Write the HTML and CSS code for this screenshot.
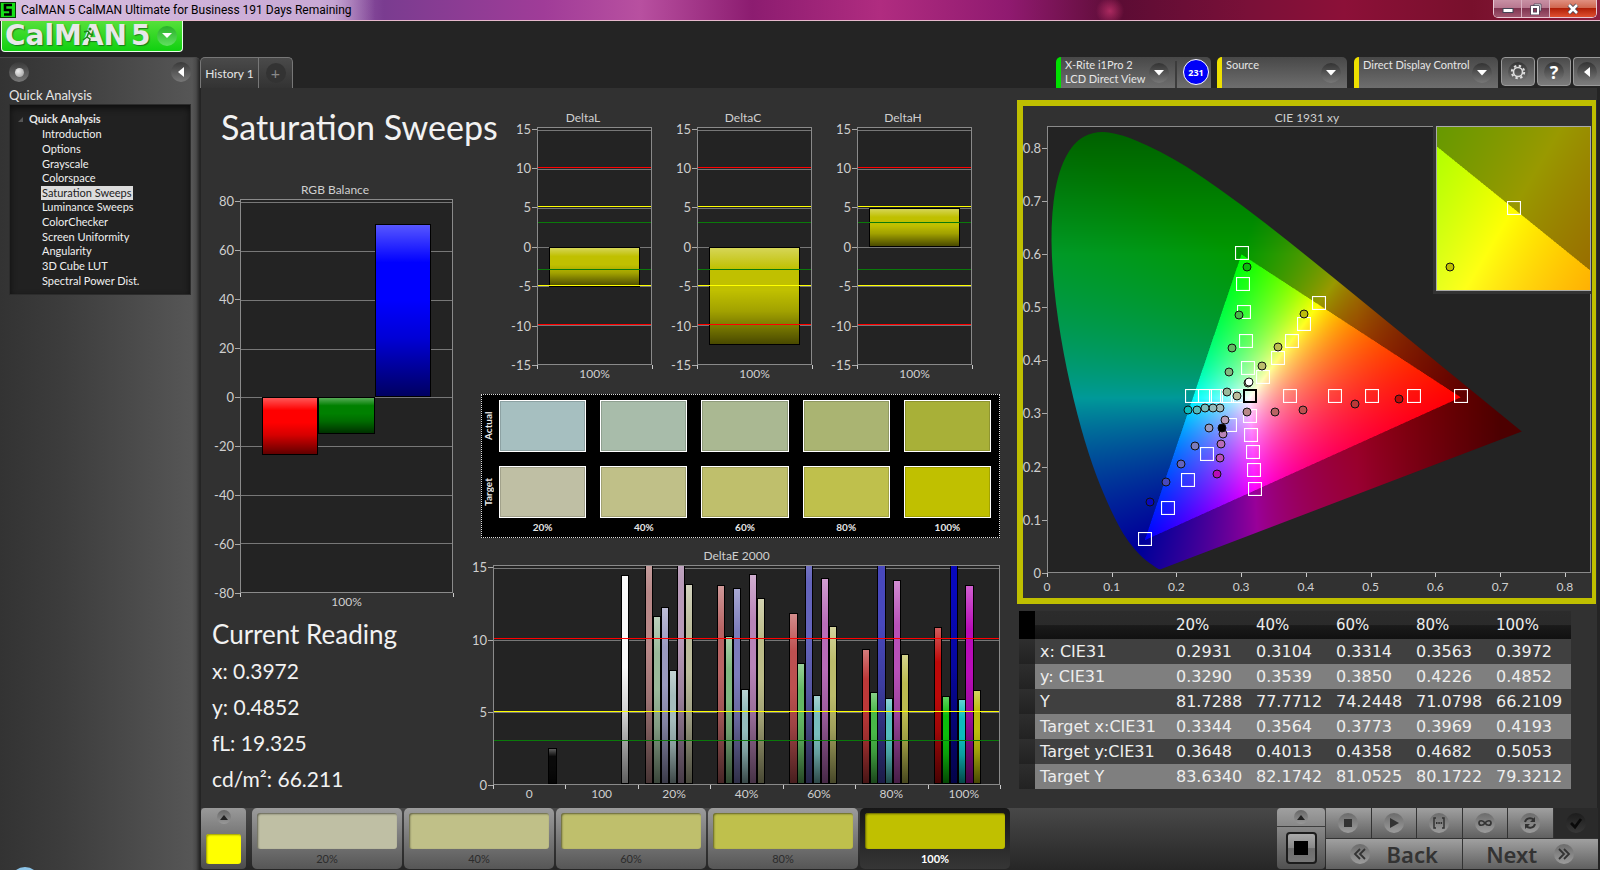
FILE: index.html
```html
<!DOCTYPE html>
<html lang="en">
<head>
<meta charset="utf-8">
<title>CalMAN 5</title>
<link rel="stylesheet" href="styles.css">
</head>
<body>
<header class="titlebar">
  <svg class="app-icon" viewBox="0 0 16 16" aria-hidden="true"><rect width="16" height="16" fill="#0a3c0a"/><rect x="1" y="1" width="14" height="14" fill="#18e018"/><path d="M12 3H5v5h5.5v4.500H4" fill="none" stroke="#000" stroke-width="2.600"/></svg>
  <span class="window-title">CalMAN 5 CalMAN Ultimate for Business 191 Days Remaining</span>
  <div class="window-buttons">
    <button class="win-btn" aria-label="Minimize"><svg width="12" height="12" viewBox="0 0 12 12"><rect x="1" y="5.500" width="10" height="4" fill="#fff" stroke="#445"/></svg></button>
    <button class="win-btn" aria-label="Restore"><svg width="12" height="12" viewBox="0 0 12 12"><path d="M4 1h7v7H9V3H4z" fill="#fff" stroke="#445" stroke-width=".8"/><rect x="2" y="4" width="6" height="6.500" fill="none" stroke="#445" stroke-width="3.400"/><rect x="2" y="4" width="6" height="6.500" fill="none" stroke="#fff" stroke-width="2"/></svg></button>
    <button class="win-btn win-close" aria-label="Close"><svg width="12" height="12" viewBox="0 0 12 12"><path d="M2 2l8 8M10 2l-8 8" stroke="#445" stroke-width="4.200"/><path d="M2 2l8 8M10 2l-8 8" stroke="#fff" stroke-width="2.600"/></svg></button>
  </div>
</header>

<div class="app">
  <div class="brand-row">
    <button class="logo" aria-label="CalMAN 5 menu">
      <span class="logo-text">CalMAN</span><span class="logo-text">5</span>
      <span class="logo-arrow"><svg width="10" height="6" viewBox="0 0 10 6"><path d="M0 0h10L5 5z" fill="#fff"/></svg></span>
      <svg class="runner" width="12" height="18" viewBox="0 0 12 18" aria-hidden="true"><circle cx="8" cy="3" r="1.600" fill="#1a8a1a"/><path d="M2 6l4-1 2 3 3 1M7 6l-2 5 3 2-1 4M5 11l-4 3" fill="none" stroke="#1a8a1a" stroke-width="1.500"/></svg>
    </button>
  </div>

  <div class="workspace">
    <aside class="sidebar">
      <div class="sidebar-tools">
        <button class="round" aria-label="Record"><span class="ball"></span></button>
        <button class="round" aria-label="Collapse panel"><svg width="6" height="10" viewBox="0 0 6 10"><path d="M6 0v10L0 5z" fill="#fff"/></svg></button>
      </div>
      <h2 class="sidebar-title">Quick Analysis</h2>
      <nav class="tree">
        <div class="tree-root"><svg width="5" height="5" viewBox="0 0 5 5"><path d="M5 0v5H0z" fill="#555"/></svg>Quick Analysis</div>
        <ul class="tree-list">
          <li><a href="#intro">Introduction</a></li>
          <li><a href="#options">Options</a></li>
          <li><a href="#gray">Grayscale</a></li>
          <li><a href="#space">Colorspace</a></li>
          <li><a href="#sat" class="current" aria-current="page">Saturation Sweeps</a></li>
          <li><a href="#lum">Luminance Sweeps</a></li>
          <li><a href="#checker">ColorChecker</a></li>
          <li><a href="#uniform">Screen Uniformity</a></li>
          <li><a href="#angle">Angularity</a></li>
          <li><a href="#lut">3D Cube LUT</a></li>
          <li><a href="#spectral">Spectral Power Dist.</a></li>
        </ul>
      </nav>
      <span class="orb"></span>
    </aside>

    <div class="content">
      <div class="toolbar">
        <div class="tabs">
          <button class="tab">History 1</button>
          <button class="tab tab-add" aria-label="New history"><span>+</span></button>
        </div>
        <div class="devices">
          <div class="device device-meter">
            <button class="device-menu" aria-haspopup="menu"><span class="device-name">X-Rite i1Pro 2<br>LCD Direct View</span><span class="drop"><svg width="10" height="6" viewBox="0 0 10 6"><path d="M0 0h10L5 5.500z" fill="#fff"/></svg></span></button>
            <span class="divider"></span>
            <button class="meter-count">231</button>
          </div>
          <div class="device device-source">
            <button class="device-menu" aria-haspopup="menu"><span class="device-name">Source</span><span class="drop"><svg width="10" height="6" viewBox="0 0 10 6"><path d="M0 0h10L5 5.500z" fill="#fff"/></svg></span></button>
          </div>
          <div class="device device-display">
            <button class="device-menu" aria-haspopup="menu"><span class="device-name">Direct Display Control</span><span class="drop"><svg width="10" height="6" viewBox="0 0 10 6"><path d="M0 0h10L5 5.500z" fill="#fff"/></svg></span></button>
          </div>
          <button class="tool" aria-label="Settings"><span class="dot"><svg width="16" height="16" viewBox="0 0 16 16"><circle cx="8" cy="8" r="4.500" fill="none" stroke="#ddd" stroke-width="1.600"/><circle cx="8" cy="8" r="6.200" fill="none" stroke="#ddd" stroke-width="2" stroke-dasharray="2.400 2.470"/></svg></span></button>
          <button class="tool" aria-label="Help"><span class="dot dot-help">?</span></button>
          <button class="tool tool-last" aria-label="Collapse toolbar"><span class="dot"><svg width="6" height="10" viewBox="0 0 6 10"><path d="M6 0v10L0 5z" fill="#fff"/></svg></span></button>
        </div>
      </div>

      <main class="board">
        <section class="col-left">
          <h1>Saturation Sweeps</h1>
          <div class="chart chart-rgb" data-chart="rgb"></div>
          <div class="reading">
            <h2>Current Reading</h2>
            <p>x: 0.3972</p>
            <p>y: 0.4852</p>
            <p>fL: 19.325</p>
            <p>cd/m²: 66.211</p>
          </div>
        </section>

        <section class="col-mid">
          <div class="deltas">
            <div class="chart" data-chart="deltaL"></div>
            <div class="chart" data-chart="deltaC"></div>
            <div class="chart" data-chart="deltaH"></div>
          </div>
          <div class="compare">
            <span class="side-label">Actual</span>
            <i class="swatch a20"></i><i class="swatch a40"></i><i class="swatch a60"></i><i class="swatch a80"></i><i class="swatch a100"></i>
            <span class="side-label">Target</span>
            <i class="swatch t20"></i><i class="swatch t40"></i><i class="swatch t60"></i><i class="swatch t80"></i><i class="swatch t100"></i>
            <span></span><b>20%</b><b>40%</b><b>60%</b><b>80%</b><b>100%</b>
          </div>
          <div class="chart chart-de" data-chart="deltaE"></div>
        </section>

        <section class="col-right">
          <div class="cie-card">
            <div class="chart chart-cie" data-chart="cie"></div>
          </div>
          <table class="data">
            <thead><tr><td class="grip"></td><td></td><th scope="col">20%</th><th scope="col">40%</th><th scope="col">60%</th><th scope="col">80%</th><th scope="col">100%</th></tr></thead>
            <tbody>
              <tr><td class="grip"></td><th scope="row">x: CIE31</th><td>0.2931</td><td>0.3104</td><td>0.3314</td><td>0.3563</td><td>0.3972</td></tr>
              <tr><td class="grip"></td><th scope="row">y: CIE31</th><td>0.3290</td><td>0.3539</td><td>0.3850</td><td>0.4226</td><td>0.4852</td></tr>
              <tr><td class="grip"></td><th scope="row">Y</th><td>81.7288</td><td>77.7712</td><td>74.2448</td><td>71.0798</td><td>66.2109</td></tr>
              <tr><td class="grip"></td><th scope="row">Target x:CIE31</th><td>0.3344</td><td>0.3564</td><td>0.3773</td><td>0.3969</td><td>0.4193</td></tr>
              <tr><td class="grip"></td><th scope="row">Target y:CIE31</th><td>0.3648</td><td>0.4013</td><td>0.4358</td><td>0.4682</td><td>0.5053</td></tr>
              <tr><td class="grip"></td><th scope="row">Target Y</th><td>83.6340</td><td>82.1742</td><td>81.0525</td><td>80.1722</td><td>79.3212</td></tr>
            </tbody>
          </table>
        </section>
      </main>

      <footer class="dock">
        <button class="current-color" aria-label="Current color"><span class="up"><svg width="8" height="5" viewBox="0 0 8 5"><path d="M0 5h8L4 0z" fill="#222"/></svg></span><i></i></button>
        <div class="patterns">
          <button class="pattern"><i class="t20"></i>20%</button>
          <button class="pattern"><i class="t40"></i>40%</button>
          <button class="pattern"><i class="t60"></i>60%</button>
          <button class="pattern"><i class="t80"></i>80%</button>
          <button class="pattern selected"><i class="t100"></i>100%</button>
        </div>
        <div class="transport">
          <div class="window-size">
            <button class="size-up" aria-label="More"><span class="up"><svg width="8" height="5" viewBox="0 0 8 5"><path d="M0 5h8L4 0z" fill="#222"/></svg></span></button>
            <button class="size-box" aria-label="Pattern window"><span><i></i></span></button>
          </div>
          <div class="controls">
            <button aria-label="Stop"><span class="disc"><svg width="20" height="20" viewBox="0 0 20 20"><rect x="6" y="6" width="8" height="8" fill="#333"/></svg></span></button>
            <button aria-label="Play"><span class="disc"><svg width="20" height="20" viewBox="0 0 20 20"><path d="M6 5v10l9-5z" fill="#333"/></svg></span></button>
            <button aria-label="Read series"><span class="disc"><svg width="20" height="20" viewBox="0 0 20 20"><path d="M7 5H5v10h2M13 5h2v10h-2" fill="none" stroke="#333" stroke-width="1.500"/><path d="M7 10h1.500M9.300 10h1.500M11.600 10h1.500" stroke="#333" stroke-width="2"/></svg></span></button>
            <button aria-label="Read continuous"><span class="disc"><svg width="20" height="20" viewBox="0 0 20 20"><path d="M10 10C8 7 4 7 4 10s4 3 6 0 6-3 6 0-4 3-6 0z" fill="none" stroke="#333" stroke-width="1.700"/></svg></span></button>
            <button aria-label="Refresh"><span class="disc"><svg width="20" height="20" viewBox="0 0 20 20"><path d="M5 9c1-4 6-5 9-2M15 11c-1 4-6 5-9 2" fill="none" stroke="#333" stroke-width="2"/><path d="M15 4v5h-5zM5 16v-5h5z" fill="#333"/></svg></span></button>
            <button class="done" aria-label="Accept"><span class="disc"><svg width="20" height="20" viewBox="0 0 20 20"><path d="M5 10l4 4 6-8" fill="none" stroke="#0a0a0a" stroke-width="2.800"/></svg></span></button>
            <button class="nav-btn"><span class="disc"><svg width="20" height="20" viewBox="0 0 20 20"><path d="M10 5l-5 5 5 5M15 5l-5 5 5 5" fill="none" stroke="#333" stroke-width="1.800"/></svg></span><b>Back</b></button>
            <button class="nav-btn"><b>Next</b><span class="disc"><svg width="20" height="20" viewBox="0 0 20 20"><path d="M5 5l5 5-5 5M10 5l5 5-5 5" fill="none" stroke="#333" stroke-width="1.800"/></svg></span></button>
          </div>
        </div>
      </footer>
    </div>
  </div>
</div>
<script src="charts.js"></script>
</body>
</html>
```
FILE: styles.css
```css
* { box-sizing: border-box; }
body {
  margin: 0;
  min-height: 100vh;
  display: flex;
  flex-direction: column;
  background: #242424;
  color: #e6e6e6;
  font-family: Lato, "Open Sans", sans-serif;
  font-size: 12px;
  overflow-x: hidden;
}
button {
  font: inherit;
  color: inherit;
  border: 0;
  margin: 0;
  padding: 0;
  background: none;
}
h1, h2, p, ul { margin: 0; padding: 0; font-weight: 400; }
svg { display: block; }

/* title bar */
.titlebar {
  height: 21px;
  display: flex;
  align-items: center;
  border-bottom: 1px solid #e6b8cc;
  background:
    radial-gradient(ellipse 14px 14px at 1110px 11px, rgba(220, 60, 120, .6), transparent),
    linear-gradient(90deg, rgba(240, 225, 245, .6) 0, rgba(240, 225, 245, .5) 335px, transparent 375px),
    linear-gradient(90deg, #b48cc0 0, #a070b4 20%, #7a3c90 24%, #a03c98 34%, #b850a0 40%, #8c1c70 47%, #b02c80 55%, #901a70 63%, #5c0c34 70%, #7a1038 78%, #8c1038 84%, #78102c 92%, #8c2040 100%);
}
.app-icon { width: 16px; height: 16px; margin-right: 5px; }
.window-title { font: 12px Roboto, sans-serif; color: #000; flex: 1; }
.window-buttons {
  display: flex;
  align-self: flex-start;
  height: 18px;
  margin-right: 3px;
  border: 1px solid #e8c8d4;
  border-top: 0;
  border-radius: 0 0 5px 5px;
  overflow: hidden;
}
.win-btn {
  width: 28px;
  display: grid;
  place-items: center;
  background: linear-gradient(#c890a4 0, #b87890 45%, #803450 50%, #a05870 100%);
  border-right: 1px solid #d8b0c0;
}
.win-close { width: 46px; border: 0; background: linear-gradient(#e09080 0, #d06850 45%, #b02008 50%, #e05030 100%); }

/* shell */
.app { flex: 1; display: flex; flex-direction: column; }
.brand-row { height: 36px; }
.logo {
  position: relative;
  display: flex;
  align-items: center;
  gap: 4px;
  width: 182px;
  height: 31px;
  margin-left: 1px;
  padding-left: 3px;
  background: linear-gradient(#56e03a, #10d010);
  border: 1px solid #e8ffe8;
  border-top: 0;
  border-radius: 0 0 4px 4px;
}
.logo-text {
  font: bold 28px/28px "DejaVu Sans", sans-serif;
  color: #e8e8e8;
  text-shadow: 1px 1px 1px #1a7a1a;
}
.logo-arrow {
  display: grid;
  place-items: center;
  flex: none;
  width: 20px;
  height: 20px;
  margin-left: 2px;
  border-radius: 50%;
  background: linear-gradient(#28b028, #60e060);
}
.runner { position: absolute; left: 80px; top: 5px; }
.workspace { flex: 1; display: flex; align-items: stretch; }

/* sidebar */
.sidebar {
  position: relative;
  flex: none;
  width: 200px;
  padding: 4px 9px 0;
  background: linear-gradient(90deg, #333 0, #3c3c3c 30%, #565656 96%, #4a4a4a 98%, #222 100%);
  border-top: 1px solid #4a4a4a;
  border-radius: 0 5px 0 0;
  overflow: hidden;
}
.sidebar-tools { display: flex; justify-content: space-between; }
.round {
  width: 20px;
  height: 20px;
  display: grid;
  place-items: center;
  border-radius: 50%;
  background: linear-gradient(#3a3a3a, #777);
}
.ball { width: 9px; height: 9px; border-radius: 50%; background: radial-gradient(circle at 35% 35%, #eee, #999); }
.sidebar-title { font-size: 13px; line-height: 18px; padding-top: 4px; }
.tree {
  height: 191px;
  padding: 6px 0 0 8px;
  background: #212121;
  border: 1px solid #2c2c2c;
  box-shadow: inset 0 3px 6px #0e0e0e;
  font-size: 11px;
}
.tree-root { display: flex; align-items: center; gap: 6px; font-weight: 700; line-height: 16px; }
.tree-list {
  list-style: none;
  display: grid;
  grid-auto-rows: 1fr;
  height: 161px;
  padding-left: 23px;
}
.tree-list li { display: flex; align-items: center; }
.tree a { color: #f0f0f0; text-decoration: none; line-height: 14px; padding: 0 1px; }
.tree a.current { background: #dcdcdc; color: #222; }
.orb { position: absolute; left: 10px; bottom: -27px; width: 30px; height: 30px; border-radius: 50%; background: #8cc4e8; }

/* toolbar */
.content { flex: 1; min-width: 0; display: flex; flex-direction: column; }
.toolbar { display: flex; justify-content: space-between; height: 31px; }
.tabs { display: flex; }
.tab {
  height: 31px;
  width: 59px;
  border: 1px solid #777;
  border-bottom: 0;
  border-radius: 5px 0 0 0;
  background: linear-gradient(#4a4a4a, #333);
  font-size: 12px;
  white-space: nowrap;
}
.tab-add { width: 34px; border-left: 0; border-radius: 0 5px 0 0; display: grid; place-items: center; }
.tab-add span { width: 20px; height: 20px; line-height: 19px; border-radius: 50%; background: #333; color: #888; font-size: 16px; }
.devices { display: flex; align-items: flex-start; overflow: hidden; }
.device {
  display: flex;
  height: 31px;
  margin-right: 7px;
  border-left: 5px solid #eee000;
  border-radius: 5px 5px 0 0;
  background: linear-gradient(#484848, #6e6e6e);
}
.device-meter { width: 155px; margin-right: 6px; border-left-color: #00e000; }
.device-source { width: 130px; }
.device-display { width: 144px; margin-right: 3px; }
.device-menu { flex: 1; display: flex; justify-content: space-between; padding: 1px 6px 0 4px; text-align: left; font-size: 11px; }
.device-name { line-height: 14px; white-space: nowrap; }
.drop, .dot {
  display: grid;
  place-items: center;
  flex: none;
  width: 20px;
  height: 20px;
  border-radius: 50%;
  background: linear-gradient(#333, #777);
}
.device-menu .drop { margin-top: 5px; margin-left: -6px; }
.divider { width: 2px; background: #3c3c3c; margin-top: 4px; }
.meter-count {
  width: 26px;
  height: 26px;
  margin: 2px 2px 0 6px;
  border: 1px solid #fff;
  border-radius: 50%;
  background: #0000f8;
  color: #fff;
  font: bold 9px "Open Sans", sans-serif;
}
.tool {
  width: 34px;
  height: 29px;
  margin-right: 2px;
  display: grid;
  place-items: center;
  border: 1px solid #999;
  border-radius: 4px;
  background: linear-gradient(#4a4a4a, #7c7c7c);
}
.tool-last { width: 27px; margin: 0; border-right: 0; border-radius: 4px 0 0 4px; }
.dot-help { font: bold 18px/20px "Open Sans", sans-serif; color: #fff; }

/* board */
.board {
  flex: 1;
  display: grid;
  grid-template-columns: 239fr 527fr 579fr;
  column-gap: 17px;
  margin: 0 3px 0 1px;
  padding: 12px 1px 6px 16px;
  background: #313131;
}
.board > section { min-width: 0; display: flex; flex-direction: column; }
.board h1 { font-size: 34px; line-height: 40px; padding: 7px 0 0 4px; white-space: nowrap; color: #f2f2f2; }
.reading { margin: 6px 0 0 -5px; color: #f2f2f2; white-space: nowrap; }
.reading h2 { font-size: 26px; line-height: 37px; }
.reading p { font-size: 21px; line-height: 36px; }
.col-mid { padding-top: 10px; }

/* charts */
.chart {
  flex: 1;
  min-width: 0;
  display: grid;
  grid-template-columns: 23px minmax(0, 1fr);
  grid-template-rows: 17px minmax(0, 1fr) 17px;
  color: #cfcfcf;
  font-size: 13px;
}
.chart-rgb { flex: none; height: 428px; margin: 35px 3px 0 0; }
.chart-de { grid-template-columns: 20px minmax(0, 1fr); margin-top: 10px; }
.chart-cie { grid-template-columns: 24px minmax(0, 1fr); grid-template-rows: 20px minmax(0, 1fr) 25px; }
.chart-title { grid-column: 1 / -1; text-align: center; line-height: 16px; font-size: 12px; }
.chart-cie .chart-title { line-height: 24px; }
.y-axis { position: relative; }
.y-axis span { position: absolute; right: 6px; transform: translateY(-50%); line-height: 16px; }
.y-axis i { position: absolute; right: 0; width: 5px; height: 1px; background: #aaa; }
.plot { position: relative; background: #232323; border: 1px solid #8a8a8a; }
.plot-clip { position: absolute; inset: 0; overflow: hidden; }
.gridline { position: absolute; left: 0; right: 0; height: 1px; background: #777; }
.limit { position: absolute; left: 0; right: 0; height: 1px; }
.limit-red { background: #ff0000; }
.limit-yellow { background: #ffff00; }
.limit-green { background: #0a7a0a; }
.bar {
  position: absolute;
  border: 1px solid #000;
  background-image: linear-gradient(rgba(255, 255, 255, .34) 0, rgba(255, 255, 255, 0) 22%, rgba(0, 0, 0, 0) 44%, rgba(0, 0, 0, .16) 66%, rgba(0, 0, 0, .62) 100%);
}
.x-axis { grid-column: 2; position: relative; }
.x-axis span { position: absolute; top: 1px; transform: translateX(-50%); line-height: 16px; font-size: 12px; }
.chart-cie .x-axis span { top: 6px; }
.x-axis i { position: absolute; top: 0; width: 1px; height: 4px; background: #ccc; }
.deltas { flex: 272; display: flex; gap: 22px; padding: 0 28px 0 41px; }
.col-mid .chart-de { flex: 254; }

.compare {
  flex: none;
  height: 144px;
  margin: 12px 0 0 8px;
  padding: 5px 8px 0 1px;
  display: grid;
  grid-template-columns: 2px repeat(5, minmax(0, 1fr));
  grid-template-rows: 66px 52px 18px;
  column-gap: 14px;
  background: #000;
  border: 1px dotted #ddd;
}
.side-label { writing-mode: vertical-rl; transform: rotate(180deg); justify-self: start; font-weight: 700; font-size: 10px; text-align: center; line-height: 10px; height: 52px; }
.compare b { text-align: center; line-height: 18px; font-size: 10px; }
.swatch { border: 1px solid #fff; box-shadow: inset 0 0 0 1px rgba(0, 0, 0, .15); height: 52px; }
.a20 { background: #a6bfc0; } .a40 { background: #a8bcaa; } .a60 { background: #aab892; } .a80 { background: #aab472; } .a100 { background: #a8b038; }
.t20 { background: #bfbfa4; } .t40 { background: #c0c088; } .t60 { background: #bfbf6c; } .t80 { background: #bfc04c; } .t100 { background: #c0c000; }

/* chromaticity */
.cie-card { flex: 1; display: flex; border: 6px solid #bfbf00; border-right-width: 4px; padding: 0 1px 0 0; }
.plot canvas { position: absolute; left: 0; top: 0; width: 100%; height: 100%; }
.mark { position: absolute; transform: translate(-50%, -50%); }
.mark-target { width: 14px; height: 14px; border: 1px solid #fff; box-shadow: inset 0 0 1px #fff; }
.mark-white { border: 2px solid #000; }
.mark-read { width: 9px; height: 9px; border: 1px solid #111; border-radius: 50%; }
.inset { position: absolute; right: -1px; top: -1px; width: 155px; width: 28.6%; height: 37%; border: 1px solid #aaa; box-shadow: -1px 1px 0 2px #333; background: #232323; }

.data { margin: 7px 25px 13px 2px; border-collapse: collapse; font: 16px "DejaVu Sans", sans-serif; color: #ededed; }
.data th, .data td { padding: 0 0 0 5px; height: 25px; line-height: 20px; font-weight: 400; text-align: left; width: 80px; white-space: nowrap; }
.data thead tr { background: linear-gradient(#2c2c2c 0, #2a2a2a 50%, #1a1a1a 52%, #111 100%); }
.data thead th, .data thead td { height: 28px; font-size: 15px; }
.data .grip { width: 16px; padding: 0; background: linear-gradient(#2e2e2e, #222); }
.data thead .grip { background: #000; }
.data tr > :nth-child(2) { width: auto; }
.data tbody tr { background: #404040; }
.data tbody tr:nth-child(even) { background: #7f7f7f; }

/* dock */
.dock { display: flex; height: 62px; margin: 0 2px 0 1px; padding-bottom: 1px; background: linear-gradient(#484848, #262626); }
.current-color {
  width: 45px;
  display: flex;
  flex-direction: column;
  align-items: center;
  justify-content: space-between;
  padding: 2px 0 5px;
  border-radius: 4px;
  background: linear-gradient(#999, #4c4c4c);
}
.current-color i { width: 35px; height: 30px; border-radius: 3px; background: #ff0; box-shadow: inset 1px 1px 2px #990; }
.up { width: 14px; height: 14px; display: grid; place-items: center; border-radius: 50%; background: linear-gradient(#666, #999); }
.patterns { display: flex; gap: 2px; margin-left: 6px; flex: 0 1 758px; }
.pattern {
  flex: 1;
  display: flex;
  flex-direction: column;
  align-items: center;
  gap: 3px;
  padding: 5px 5px 0;
  border-radius: 5px;
  background: linear-gradient(#9c9c9c, #565656);
  color: #2c2c2c;
  font-size: 11px;
}
.pattern i { width: 100%; height: 36px; border-radius: 3px; box-shadow: inset 1px 1px 2px rgba(0, 0, 0, .5); }
.pattern.selected { background: linear-gradient(#161616, #363636); color: #fff; font-weight: 700; }
.transport { display: flex; margin-left: auto; gap: 1px; }
.window-size { width: 48px; display: flex; flex-direction: column; gap: 1px; }
.size-up { height: 18px; display: grid; place-items: center; border-radius: 4px 4px 0 0; background: linear-gradient(#a0a0a0, #888); }
.size-box { flex: 1; display: grid; place-items: center; border-radius: 0 0 4px 4px; background: linear-gradient(#888, #505050); }
.size-box span { width: 31px; height: 32px; display: grid; place-items: center; border: 2px solid #1c1c1c; border-radius: 4px; background: linear-gradient(#aaa, #888 50%, #6c6c6c 52%, #777); }
.size-box i { width: 14px; height: 14px; background: #000; }
.controls { width: 272px; display: grid; grid-template-columns: repeat(6, 1fr); grid-template-rows: 30px 30px; gap: 1px; background: #333; }
.controls button { display: grid; place-items: center; background: linear-gradient(#a0a0a0, #606060); }
.controls button.done { background: #2a2a2a; }
.disc { width: 20px; height: 20px; border-radius: 50%; background: linear-gradient(#6c6c6c, #9c9c9c); }
.done .disc { background: linear-gradient(#1c1c1c, #383838); }
.controls .nav-btn { grid-column: span 3; display: flex; align-items: center; justify-content: center; gap: 17px; color: #333; }
.nav-btn b { font: 600 22px/28px "Noto Sans", sans-serif; }
```
FILE: charts.js
```js
(function () {
  var PALETTE = {
    '20%': ['#b88888', '#9ab89a', '#9a9ac0', '#a4bcbc', '#b89ab8', '#bcbc9c'],
    '40%': ['#b86464', '#80b880', '#7c7cbc', '#94bcbc', '#b884b8', '#bcbc88'],
    '60%': ['#bc5050', '#64b864', '#6464bc', '#78bcbc', '#b86cb8', '#bcbc6c'],
    '80%': ['#bc3838', '#48b848', '#4848bc', '#54bcbc', '#b850b8', '#bcbc50'],
    '100%': ['#bc0808', '#0cbc0c', '#0808bc', '#0cbcbc', '#b80cb8', '#bcbc0c']
  };

  function el(tag, cls, parent, style, text) {
    var n = document.createElement(tag);
    if (cls) n.className = cls;
    if (style) for (var k in style) n.style[k] = style[k];
    if (text !== undefined) n.textContent = text;
    if (parent) parent.appendChild(n);
    return n;
  }
  function pct(v) { return v * 100 + '%'; }

  function frame(root, cfg) {
    function top(v) { return pct((cfg.max - v) / (cfg.max - cfg.min)); }
    el('div', 'chart-title', root, null, cfg.title);
    var axis = el('div', 'y-axis', root);
    var plot = el('div', 'plot', root);
    cfg.yTicks.forEach(function (v) {
      el('span', '', axis, { top: top(v) }, v);
      el('i', '', axis, { top: top(v) });
    });
    var xAxis = el('div', 'x-axis', root);
    cfg.xLabels.forEach(function (l) { el('span', '', xAxis, { left: pct(l[0]) }, l[1]); });
    cfg.xTicks.forEach(function (t) { el('i', '', xAxis, { left: pct(t) }); });
    return { plot: plot, clip: el('div', 'plot-clip', plot), top: top };
  }

  function barChart(name, cfg) {
    var root = document.querySelector('[data-chart="' + name + '"]');
    var f = frame(root, cfg);
    cfg.yTicks.forEach(function (v) { el('div', 'gridline', f.clip, { top: f.top(v) }); });
    cfg.bars.forEach(function (b) {
      el('div', 'bar', f.clip, {
        left: pct(b[0]), width: pct(b[1]),
        top: f.top(Math.max(0, b[2])),
        height: pct(Math.abs(b[2]) / (cfg.max - cfg.min)),
        backgroundColor: b[3]
      });
    });
    (cfg.limits || []).forEach(function (l) { el('div', 'limit limit-' + l[1], f.clip, { top: f.top(l[0]) }); });
  }

  barChart('rgb', {
    title: 'RGB Balance', min: -80, max: 81,
    yTicks: [80, 60, 40, 20, 0, -20, -40, -60, -80],
    xLabels: [[.5, '100%']], xTicks: [0, 1],
    bars: [[.1, .266, -23.6, '#ff0000'], [.367, .266, -15, '#008000'], [.634, .266, 71, '#0000ff']]
  });
  var limits = [[10.2, 'red'], [5.2, 'yellow'], [3.2, 'green'], [-2.9, 'green'], [-4.9, 'yellow'], [-9.9, 'red']];
  [['L', -5.2], ['C', -12.6], ['H', 4.9]].forEach(function (d) {
    barChart('delta' + d[0], {
      title: 'Delta' + d[0], min: -15, max: 15.2,
      yTicks: [15, 10, 5, 0, -5, -10, -15],
      xLabels: [[.5, '100%']], xTicks: [0, 1],
      bars: [[.1, .8, d[1], '#c0c000']], limits: limits
    });
  });

  var readings = [
    ['0', [, , , , , , 2.5]], ['100', [, , , , , , 14.5]],
    ['20%', [17, 11.7, 12.3, 7.9, 18, 13.9]],
    ['40%', [13.8, 10.3, 13.6, 6.6, 14.6, 12.9]],
    ['60%', [11.9, 8.4, 18, 6.2, 14.3, 11]],
    ['80%', [9.4, 6.4, 20, 6, 14.2, 9]],
    ['100%', [10.9, 6.1, 24, 5.9, 13.8, 6.5]]
  ];
  var deBars = [], deLabels = [], deTicks = [0];
  readings.forEach(function (r, i) {
    r[1].forEach(function (v, k) {
      var color = k === 6 ? (r[0] === '0' ? '#0a0a0a' : '#f8f8f8') : PALETTE[r[0]][k];
      deBars.push([(i + .095 + k * .11) / 7, .112 / 7, v, color]);
    });
    deLabels.push([(i + .5) / 7, r[0]]);
    deTicks.push((i + 1) / 7);
  });
  barChart('deltaE', {
    title: 'DeltaE 2000', min: 0, max: 15.15, yTicks: [15, 10, 5, 0],
    xLabels: deLabels, xTicks: deTicks, bars: deBars,
    limits: [[10.15, 'red'], [5.1, 'yellow'], [3.05, 'green']]
  });

  /* chromaticity diagram */
  var LOCUS = [[.1741, .005], [.1714, .0051], [.1644, .0109], [.1566, .0177], [.144, .0297], [.1241, .0578], [.1096, .0868], [.0913, .1327], [.0687, .2007], [.0454, .295], [.0235, .4127], [.0082, .5384], [.0039, .6548], [.0139, .7502], [.0389, .812], [.0743, .8338], [.1142, .8262], [.1547, .8059], [.1929, .7816], [.2296, .7543], [.3016, .6923], [.3731, .6245], [.4441, .5547], [.5125, .4866], [.5752, .4242], [.627, .3725], [.6658, .334], [.6915, .3083], [.719, .2809], [.7347, .2653]];

  function paint(canvas, x0, x1, y0, y1) {
    var w = canvas.width = Math.max(1, canvas.clientWidth * 2);
    var h = canvas.height = Math.max(1, canvas.clientHeight * 2);
    var ctx = canvas.getContext('2d');
    var img = ctx.createImageData(w, h), d = img.data, p = 0;
    for (var j = 0; j < h; j++) {
      var y = Math.max(.001, y1 - (j + .5) / h * (y1 - y0));
      for (var i = 0; i < w; i++) {
        var x = x0 + (i + .5) / w * (x1 - x0);
        var X = x / y, Z = (1 - x - y) / y;
        var r = 3.2406 * X - 1.5372 - .4986 * Z;
        var g = -.9689 * X + 1.8758 + .0415 * Z;
        var b = .0557 * X - .204 + 1.057 * Z;
        var k = 1;
        if (r < 0 || g < 0 || b < 0) {
          k = .6 - .3 * Math.min(1, Math.max(0, (x - .48) / .22)) - .22 * Math.min(1, Math.max(0, (y - .6) / .23));
          r = Math.max(0, r); g = Math.max(0, g); b = Math.max(0, b);
        }
        var m = Math.max(r, g, b);
        d[p++] = 255 * k * r / m;
        d[p++] = 255 * k * g / m;
        d[p++] = 255 * k * b / m;
        d[p++] = 255;
      }
    }
    ctx.putImageData(img, 0, 0);
    ctx.globalCompositeOperation = 'destination-in';
    ctx.beginPath();
    function px(q) { return [(q[0] - x0) / (x1 - x0) * w, (y1 - q[1]) / (y1 - y0) * h]; }
    var pts = LOCUS.map(px);
    ctx.moveTo(pts[0][0], pts[0][1]);
    for (var n = 1; n < pts.length - 1; n++) {
      ctx.quadraticCurveTo(pts[n][0], pts[n][1], (pts[n][0] + pts[n + 1][0]) / 2, (pts[n][1] + pts[n + 1][1]) / 2);
    }
    ctx.lineTo(pts[n][0], pts[n][1]);
    ctx.closePath();
    ctx.fill();
    ctx.globalCompositeOperation = 'source-over';
  }

  var tenths = [0, .1, .2, .3, .4, .5, .6, .7, .8], LIMIT = .8405;
  var cie = frame(document.querySelector('[data-chart="cie"]'), {
    title: 'CIE 1931 xy', min: 0, max: LIMIT, yTicks: tenths,
    xLabels: tenths.map(function (t) { return [t / LIMIT, t]; }),
    xTicks: tenths.map(function (t) { return t / LIMIT; })
  });
  var big = el('canvas', '', cie.clip);

  function mark(parent, cls, q, x0, x1, y0, y1, color) {
    el('span', 'mark ' + cls, parent, {
      left: pct((q[0] - x0) / (x1 - x0)), top: pct((y1 - q[1]) / (y1 - y0)),
      backgroundColor: color || 'transparent'
    });
  }
  var targets = [
    [.376, .3317], [.4447, .3317], [.503, .3317], [.5676, .3317], [.64, .3317],
    [.3107, .3857], [.3072, .4372], [.3043, .4919], [.302, .544], [.3003, .6031],
    [.2827, .277], [.2467, .2224], [.2164, .1734], [.1855, .1206], [.15, .0622],
    [.2951, .3317], [.2776, .3317], [.2601, .3317], [.2433, .3317], [.2234, .3317],
    [.3137, .2946], [.3154, .2588], [.3172, .2274], [.3195, .1935], [.3213, .1571],
    [.3335, .3675], [.3568, .4033], [.3777, .4372], [.397, .4693], [.4203, .5082]
  ];
  targets.forEach(function (t) { mark(cie.clip, 'mark-target', t, 0, LIMIT, 0, LIMIT); });
  mark(cie.clip, 'mark-target mark-white', [.3125, .3317], 0, LIMIT, 0, LIMIT);
  var measured = [
    [[.3085, .3015], [.3516, .3015], [.3952, .3066], [.4768, .3179], [.5443, .3267]],
    [[.277, .3405], [.2811, .3769], [.2852, .4222], [.2962, .4856], [.3085, .5761]],
    [[.25, .2727], [.2281, .2381], [.2066, .2048], [.1833, .1709], [.1588, .1319]],
    [[.2671, .3091], [.2561, .3091], [.2438, .3091], [.2316, .3066], [.2176, .3059]],
    [[.2747, .2871], [.2718, .2613], [.2683, .2412], [.2671, .2161], [.2625, .1847]],
    [[.2934, .3317], [.3104, .3569], [.3324, .3882], [.3568, .4247], [.397, .4875]]
  ];
  var levels = ['20%', '40%', '60%', '80%', '100%'];
  measured.forEach(function (series, s) {
    series.forEach(function (q, i) { mark(cie.clip, 'mark-read', q, 0, LIMIT, 0, LIMIT, PALETTE[levels[i]][s]); });
  });
  mark(cie.clip, 'mark-read', [.3119, .3581], 0, LIMIT, 0, LIMIT, '#fff');
  mark(cie.clip, 'mark-read', [.27, .2727], 0, LIMIT, 0, LIMIT, '#000');

  var box = [.3926, .446, .4773, .5332];
  var inset = el('div', 'inset', cie.plot);
  var small = el('canvas', '', inset);
  mark(inset, 'mark-target', [.4193, .5053], box[0], box[1], box[2], box[3]);
  mark(inset, 'mark-read', [.3972, .4852], box[0], box[1], box[2], box[3], '#c0c000');

  function redraw() {
    paint(big, 0, LIMIT, 0, LIMIT);
    paint(small, box[0], box[1], box[2], box[3]);
  }
  redraw();
  window.addEventListener('resize', redraw);
})();
```
